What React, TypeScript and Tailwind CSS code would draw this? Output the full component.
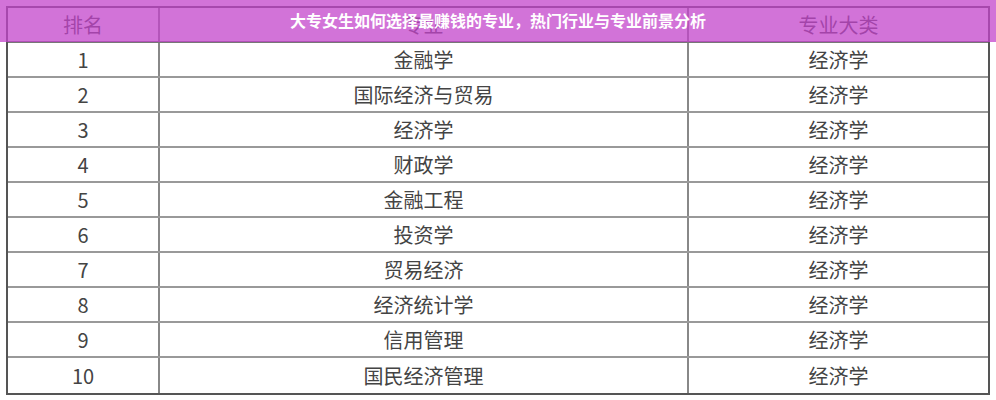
import React from 'react';

const rows: [string, string, string][] = [
  ['1', '金融学', '经济学'],
  ['2', '国际经济与贸易', '经济学'],
  ['3', '经济学', '经济学'],
  ['4', '财政学', '经济学'],
  ['5', '金融工程', '经济学'],
  ['6', '投资学', '经济学'],
  ['7', '贸易经济', '经济学'],
  ['8', '经济统计学', '经济学'],
  ['9', '信用管理', '经济学'],
  ['10', '国民经济管理', '经济学'],
];

const font = { fontFamily: '"Noto Sans CJK SC", "Noto Sans", sans-serif' };

export default function App() {
  return (
    <div className="relative w-[996px] h-[400px] bg-white overflow-hidden" style={font}>
      <div className="ml-[6px] mt-[6px] w-[984px] border-2 border-[#555] text-[20px] text-[#444]">
        <div className="flex h-[35px] border-b-2 border-[#777]">
          <div className="w-[152px] border-r-2 border-[#888] flex items-center justify-center">排名</div>
          <div className="w-[529px] border-r-2 border-[#888] flex items-center justify-center">专业</div>
          <div className="flex-1 flex items-center justify-center">专业大类</div>
        </div>
        {rows.map(([rank, name, cat], i) => (
          <div
            key={rank}
            className={`flex h-[35px] ${i < rows.length - 1 ? 'border-b-2 border-[#999]' : 'h-[33px]'}`}
          >
            <div className="w-[152px] border-r-2 border-[#888] flex items-center justify-center">{rank}</div>
            <div className="w-[529px] border-r-2 border-[#888] flex items-center justify-center">{name}</div>
            <div className="flex-1 flex items-center justify-center">{cat}</div>
          </div>
        ))}
      </div>
      <div className="absolute top-0 left-0 right-0 h-[42px] bg-[rgba(195,68,203,0.75)] flex justify-center pt-[10px]">
        <span className="text-[16px] font-bold text-white leading-[20px]">
          大专女生如何选择最赚钱的专业，热门行业与专业前景分析
        </span>
      </div>
    </div>
  );
}
